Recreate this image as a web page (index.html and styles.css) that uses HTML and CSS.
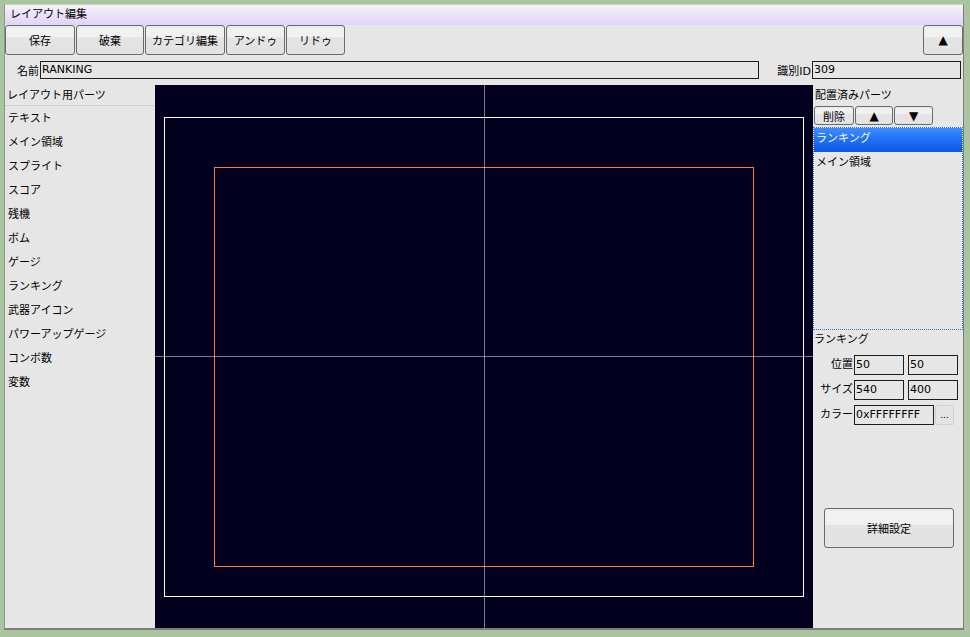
FILE: index.html
```html
<!DOCTYPE html>
<html lang="ja">
<head>
<meta charset="utf-8">
<title>レイアウト編集</title>
<link rel="stylesheet" href="styles.css">
</head>
<body>
<div class="window">
  <div class="titlebar">レイアウト編集</div>
  <div class="toolbar">
    <button class="btn tb-save">保存</button>
    <button class="btn tb-discard">破棄</button>
    <button class="btn tb-cat">カテゴリ編集</button>
    <button class="btn tb-undo">アンドゥ</button>
    <button class="btn tb-redo">リドゥ</button>
    <span class="spacer"></span>
    <button class="btn tb-up">▲</button>
  </div>
  <div class="namerow">
    <span class="lbl name-lbl">名前</span>
    <div class="field name-field">RANKING</div>
    <span class="lbl id-lbl">識別ID</span>
    <div class="field id-field">309</div>
  </div>
  <div class="main">
    <div class="left">
      <div class="left-head">レイアウト用パーツ</div>
      <ul class="parts">
        <li>テキスト</li>
        <li>メイン領域</li>
        <li>スプライト</li>
        <li>スコア</li>
        <li>残機</li>
        <li>ボム</li>
        <li>ゲージ</li>
        <li>ランキング</li>
        <li>武器アイコン</li>
        <li>パワーアップゲージ</li>
        <li>コンボ数</li>
        <li>変数</li>
      </ul>
    </div>
    <div class="canvas">
      <div class="screen"></div>
      <div class="part-rect"></div>
      <div class="cross-v"></div>
      <div class="cross-h"></div>
    </div>
    <div class="right">
      <div class="right-head">配置済みパーツ</div>
      <div class="order-btns">
        <button class="btn sm b-del">削除</button>
        <button class="btn sm b-up">▲</button>
        <button class="btn sm b-down">▼</button>
      </div>
      <ul class="placed">
        <li class="sel">ランキング</li>
        <li>メイン領域</li>
      </ul>
      <div class="prop-title">ランキング</div>
      <div class="props">
        <span class="plbl">位置</span>
        <div class="field pf">50</div>
        <div class="field pf">50</div>
        <span class="plbl">サイズ</span>
        <div class="field pf">540</div>
        <div class="field pf">400</div>
        <span class="plbl">カラー</span>
        <div class="color-wrap">
          <div class="field color-field">0xFFFFFFFF</div>
          <button class="btn dots">...</button>
        </div>
      </div>
      <button class="btn detail">詳細設定</button>
    </div>
  </div>
</div>
</body>
</html>
```
FILE: styles.css
```css
* { box-sizing: border-box; }
html, body { margin: 0; padding: 0; }
body {
  width: 970px;
  height: 637px;
  background: #a9c49f;
  padding: 4px 0 0 4px;
  font-family: "DejaVu Sans", "Noto Sans CJK JP", sans-serif;
  font-size: 11px;
  color: #000;
  overflow: hidden;
}
.window {
  width: 960px;
  height: 626px;
  background: #e6e6e6;
  border-left: 1px solid #8a9a86;
  border-top: 1px solid #c4d8bc;
  border-right: 1px solid #7c7c7c;
  border-bottom: 2px solid #7c7c7c;
  display: flex;
  flex-direction: column;
}
.titlebar {
  height: 20px;
  line-height: 20px;
  padding-left: 5px;
  background: linear-gradient(to bottom, #f6f2fb 0%, #ece2f8 50%, #e2d2f6 100%);
  font-size: 11px;
}
.toolbar {
  height: 30px;
  display: flex;
  gap: 1px;
}
.spacer { flex: 1; }
.btn {
  font-family: "DejaVu Sans", "Noto Sans CJK JP", sans-serif;
  font-size: 11px;
  color: #000;
  border: 1px solid #6a6a6a;
  border-radius: 3px;
  padding: 0;
  margin: 0;
  background: linear-gradient(to bottom, #e8e8e8 0px, #f1f1f1 3px, #f1f1f1 38%, #e4e4e4 42%, #e2e2e2 100%);
  cursor: default;
}
.tb-save { width: 70px; }
.tb-discard { width: 68px; }
.tb-cat { width: 80px; }
.tb-undo { width: 59px; }
.tb-redo { width: 59px; }
.tb-up { width: 40px; font-size: 12px; }
.namerow {
  height: 30px;
  display: flex;
  align-items: center;
}
.lbl { white-space: nowrap; }
.name-lbl { width: 35px; text-align: right; padding-right: 1px; }
.field {
  height: 18px;
  line-height: 16px;
  border: 1px solid #1e1e1e;
  background: #e6e6e6;
  padding-left: 1px;
  white-space: nowrap;
  overflow: hidden;
}
.name-field { width: 719px; }
.id-lbl { width: 53px; text-align: right; padding-right: 1px; }
.id-field { width: 149px; }
.main {
  flex: 1;
  display: flex;
  min-height: 0;
}
.left {
  width: 150px;
}
.left-head {
  height: 21px;
  line-height: 21px;
  padding-left: 2px;
  border-bottom: 1px solid #cfcfcf;
}
.parts {
  list-style: none;
  margin: 0;
  padding: 0;
}
.parts li {
  height: 24px;
  line-height: 25px;
  padding-left: 3px;
}
.canvas {
  position: relative;
  width: 658px;
  background: #03001f;
  overflow: hidden;
}
.screen {
  position: absolute;
  left: 9px;
  top: 32px;
  width: 640px;
  height: 480px;
  border: 1px solid #ffffff;
}
.part-rect {
  position: absolute;
  left: 59px;
  top: 82px;
  width: 540px;
  height: 400px;
  border: 1px solid #ff7840;
}
.cross-v {
  position: absolute;
  left: 329px;
  top: 0;
  width: 1px;
  height: 100%;
  background: rgba(200, 200, 215, 0.6);
}
.cross-h {
  position: absolute;
  left: 0;
  top: 271px;
  width: 100%;
  height: 1px;
  background: rgba(200, 200, 215, 0.6);
}
.right {
  width: 150px;
  display: flex;
  flex-direction: column;
}
.right-head {
  height: 21px;
  line-height: 21px;
  padding-left: 2px;
}
.order-btns {
  display: flex;
  gap: 1px;
  padding-left: 1px;
  height: 19px;
}
.sm { height: 19px; font-size: 11px; }
.b-del { width: 40px; }
.b-up { width: 38px; font-size: 12px; }
.b-down { width: 39px; font-size: 12px; }
.placed {
  list-style: none;
  margin: 2px 0 0 0;
  padding: 0;
  height: 203px;
  border: 1px dotted #1f74f0;
}
.placed li {
  height: 24px;
  line-height: 22px;
  padding-left: 2px;
}
.placed li.sel {
  color: #fff;
  background: linear-gradient(to bottom, #3d8dff 0%, #2170f4 50%, #0a58e2 100%);
}
.prop-title {
  height: 20px;
  line-height: 20px;
  padding-left: 1px;
}
.props {
  display: grid;
  grid-template-columns: 37px 50px 50px;
  column-gap: 4px;
  row-gap: 5px;
  margin-top: 5px;
}
.plbl {
  text-align: right;
  line-height: 20px;
  margin-right: -3px;
  white-space: nowrap;
}
.props .pf { height: 20px; line-height: 18px; }
.color-wrap {
  grid-column: 2 / 4;
  display: flex;
  gap: 1px;
}
.color-field { width: 80px; height: 20px; line-height: 18px; }
.dots {
  width: 19px;
  height: 20px;
  border: none;
  border-radius: 2px;
  background: #e4e4e4;
  box-shadow: inset 0 0 0 1px #d0d0d0;
  font-size: 9px;
  line-height: 14px;
}
.detail {
  margin: 83px 0 0 11px;
  width: 130px;
  height: 40px;
  font-size: 11px;
  background: linear-gradient(to bottom, #e8e8e8 0px, #f1f1f1 3px, #f1f1f1 40%, #e3e3e3 44%, #e2e2e2 100%);
}
```
